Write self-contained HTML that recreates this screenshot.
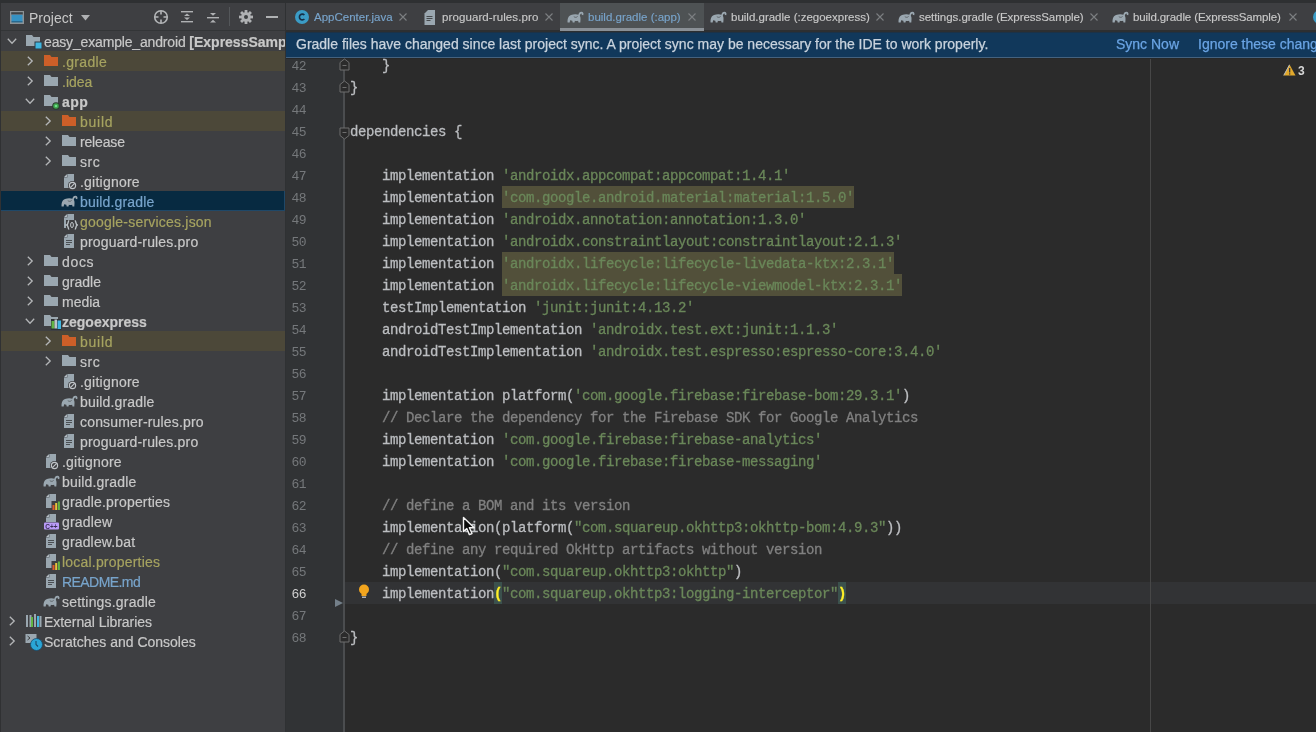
<!DOCTYPE html><html><head><meta charset="utf-8"><style>*{margin:0;padding:0;box-sizing:border-box}
html,body{width:1316px;height:732px;overflow:hidden;background:#2B2B2B;font-family:"Liberation Sans",sans-serif;position:relative}
.abs{position:absolute}
#top{left:0;top:0;width:1316px;height:3px;background:#2E3032}
#panel{left:0;top:3px;width:285px;height:729px;background:#3E3F42}
#ledge{left:0;top:3px;width:1px;height:729px;background:#303133;z-index:5}
#panelborder{left:285px;top:3px;width:1px;height:729px;background:#2F3133}
#phdr{left:0;top:3px;width:285px;height:28px;background:#3E3F42;border-bottom:1px solid #333537}
.row{position:absolute;left:1px;width:284px;height:20px;white-space:nowrap;overflow:hidden}
.row>*{margin-left:-1px}
.row .t{position:absolute;top:1px;line-height:20px;font-size:14px;color:#BBBBBB;-webkit-text-stroke:0.2px}
.ign{background:#4C4839}
.sel{background:#072A41;box-shadow:inset -1px -1px 0 #1F4868}
#tabs{left:286px;top:3px;width:1030px;height:27px;background:#3E3F42}
#tabsb{left:286px;top:30px;width:1030px;height:2px;background:#2D2F31}
#bdark{left:286px;top:58px;width:1030px;height:1px;background:#262829}
.tt{top:3px;line-height:28px;font-size:11.5px;color:#BBBBBB;white-space:nowrap;-webkit-text-stroke:0.15px}
#banner{left:286px;top:32px;width:1030px;height:26px;background:#11385B;box-shadow:inset 0 1px 0 #1C3247;border-bottom:1px solid #44627F;overflow:hidden}
#banner .t{position:absolute;top:-1px;line-height:26px;font-size:14px;color:#C9D3DD;white-space:nowrap;-webkit-text-stroke:0.25px}
#gutter{left:286px;top:59px;width:58px;height:673px;background:#313335}
#gline{left:343px;top:59px;width:2px;height:673px;background:#4B4D4F}
#margin{left:1150px;top:59px;width:1px;height:673px;background:#474747}
.ln{position:absolute;left:286px;width:20px;text-align:right;font-family:"Liberation Mono",monospace;font-size:13px;letter-spacing:-0.6px;line-height:22px;color:#75787B;padding-top:2px}
.ln.cur{color:#D2D2D2}
.cl{position:absolute;left:350px;height:22px;white-space:pre;font-family:"Liberation Mono",monospace;font-size:14px;letter-spacing:-0.4px;line-height:22px;color:#BBBDC0;padding-top:1px;-webkit-text-stroke:0.3px}
.s{color:#6A8759}
.c{color:#808080}
.hl{}
.br{color:#FFEF28;font-weight:bold}

#root{position:absolute;left:0;top:0;width:1316px;height:732px;background:#2B2B2B;will-change:transform;overflow:hidden}
</style></head><body><div id="root">
<div id="top" class="abs"></div><div id="panel" class="abs"></div><div id="ledge" class="abs"></div><div id="panelborder" class="abs"></div>
<div id="phdr" class="abs">
<svg class="abs" style="left:10px;top:8px" width="15" height="14" viewBox="0 0 15 14"><rect x="0" y="0" width="14" height="13" fill="#8C9296"/><rect x="1.2" y="1.2" width="11.6" height="2.3" fill="#3E4246"/><rect x="1.5" y="3.8" width="11" height="7.5" fill="#3592C4"/><rect x="1.5" y="10.3" width="11" height="1" fill="#25597a"/></svg>
<span class="abs" style="left:29px;top:1px;line-height:28px;font-size:14px;color:#C8C8C8">Project</span>
<svg class="abs" style="left:81px;top:12px" width="10" height="6" viewBox="0 0 10 6"><path d="M0 0 H9 L4.5 5.5 Z" fill="#AFB1B3"/></svg>
<svg class="abs" style="left:153px;top:6px" width="16" height="16" viewBox="0 0 16 16"><circle cx="8" cy="8" r="6.3" fill="none" stroke="#B4B6B8" stroke-width="1.6"/><path d="M8 2 V5.5 M8 10.5 V14 M2 8 H5.5 M10.5 8 H14" stroke="#B4B6B8" stroke-width="1.6"/></svg>
<svg class="abs" style="left:180px;top:5px" width="14" height="16" viewBox="0 0 14 16"><rect x="1" y="3" width="12" height="1.4" fill="#AFB1B3"/><rect x="1" y="13" width="12" height="1.4" fill="#AFB1B3"/><path d="M4 8 L7 5.5 L10 8 Z M4 9.5 L7 12 L10 9.5 Z" fill="#AFB1B3"/></svg>
<svg class="abs" style="left:206px;top:6px" width="14" height="16" viewBox="0 0 14 16"><rect x="1" y="8" width="12" height="1.4" fill="#AFB1B3"/><path d="M4 4 L10 4 L7 6.8 Z M4 13.5 L10 13.5 L7 10.7 Z" fill="#AFB1B3"/></svg>
<div class="abs" style="left:229px;top:4px;width:1px;height:19px;background:#54575a"></div>
<svg class="abs" style="left:239px;top:7px" width="14" height="14" viewBox="0 0 14 14"><g fill="#AFB1B3"><rect x="5.6" y="0" width="2.8" height="3.5" transform="rotate(0 7 7)"/><rect x="5.6" y="0" width="2.8" height="3.5" transform="rotate(45 7 7)"/><rect x="5.6" y="0" width="2.8" height="3.5" transform="rotate(90 7 7)"/><rect x="5.6" y="0" width="2.8" height="3.5" transform="rotate(135 7 7)"/><rect x="5.6" y="0" width="2.8" height="3.5" transform="rotate(180 7 7)"/><rect x="5.6" y="0" width="2.8" height="3.5" transform="rotate(225 7 7)"/><rect x="5.6" y="0" width="2.8" height="3.5" transform="rotate(270 7 7)"/><rect x="5.6" y="0" width="2.8" height="3.5" transform="rotate(315 7 7)"/><circle cx="7" cy="7" r="4.8"/></g><circle cx="7" cy="7" r="2" fill="#3C3F41"/></svg>
<div class="abs" style="left:266px;top:13px;width:12px;height:2px;background:#AFB1B3"></div>
</div>
<div class="row" style="top:31px">
<svg class="abs" style="left:7px;top:6px" width="10" height="8" viewBox="0 0 10 8"><path d="M0.8 1.8 L5 6.2 L9.2 1.8" fill="none" stroke="#B4B6B8" stroke-width="1.3"/></svg>
<svg class="abs" style="left:26px;top:4px" width="18" height="16" viewBox="0 0 18 16"><path d="M0 0 H6 L7.5 2 H14 V11 H0 Z" fill="#9AA7B0"/><rect x="8.5" y="6.5" width="7.5" height="7.5" fill="#2d3a45"/><rect x="9.5" y="7.5" width="6" height="6" fill="#40B6E0"/></svg>
<span class="t" style="left:44px;letter-spacing:0.000px">
<span style="color:#C8C8C8;letter-spacing:-0.16px;">easy_example_android </span>
<span style="color:#C8C8C8;font-weight:bold;">[ExpressSample]</span>
</span></div>
<div class="row ign" style="top:51px">
<svg class="abs" style="left:26px;top:5px" width="8" height="10" viewBox="0 0 8 10"><path d="M1.8 0.8 L6.2 5 L1.8 9.2" fill="none" stroke="#B4B6B8" stroke-width="1.3"/></svg>
<svg class="abs" style="left:44px;top:4px" width="18" height="16" viewBox="0 0 18 16"><path d="M0 0 H6 L7.5 2 H14 V11 H0 Z" fill="#CD5F28"/></svg>
<span class="t" style="left:62px;letter-spacing:0.333px">
<span style="color:#A6A360;">.gradle</span>
</span></div>
<div class="row" style="top:71px">
<svg class="abs" style="left:26px;top:5px" width="8" height="10" viewBox="0 0 8 10"><path d="M1.8 0.8 L6.2 5 L1.8 9.2" fill="none" stroke="#B4B6B8" stroke-width="1.3"/></svg>
<svg class="abs" style="left:44px;top:4px" width="18" height="16" viewBox="0 0 18 16"><path d="M0 0 H6 L7.5 2 H14 V11 H0 Z" fill="#9AA7B0"/></svg>
<span class="t" style="left:62px;letter-spacing:0.000px">
<span style="color:#A6A360;">.idea</span>
</span></div>
<div class="row" style="top:91px">
<svg class="abs" style="left:25px;top:6px" width="10" height="8" viewBox="0 0 10 8"><path d="M0.8 1.8 L5 6.2 L9.2 1.8" fill="none" stroke="#B4B6B8" stroke-width="1.3"/></svg>
<svg class="abs" style="left:44px;top:4px" width="18" height="16" viewBox="0 0 18 16"><path d="M0 0 H6 L7.5 2 H14 V11 H0 Z" fill="#9AA7B0"/><circle cx="12" cy="11" r="3.8" fill="#2d3a2f"/><circle cx="12" cy="11" r="2.8" fill="#3EA34B"/><circle cx="12" cy="11" r="1.3" fill="#6EE08A"/></svg>
<span class="t" style="left:62px;letter-spacing:0.500px">
<span style="color:#C8C8C8;font-weight:bold;">app</span>
</span></div>
<div class="row ign" style="top:111px">
<svg class="abs" style="left:44px;top:5px" width="8" height="10" viewBox="0 0 8 10"><path d="M1.8 0.8 L6.2 5 L1.8 9.2" fill="none" stroke="#B4B6B8" stroke-width="1.3"/></svg>
<svg class="abs" style="left:62px;top:4px" width="18" height="16" viewBox="0 0 18 16"><path d="M0 0 H6 L7.5 2 H14 V11 H0 Z" fill="#CD5F28"/></svg>
<span class="t" style="left:80px;letter-spacing:0.750px">
<span style="color:#A6A360;">build</span>
</span></div>
<div class="row" style="top:131px">
<svg class="abs" style="left:44px;top:5px" width="8" height="10" viewBox="0 0 8 10"><path d="M1.8 0.8 L6.2 5 L1.8 9.2" fill="none" stroke="#B4B6B8" stroke-width="1.3"/></svg>
<svg class="abs" style="left:62px;top:4px" width="18" height="16" viewBox="0 0 18 16"><path d="M0 0 H6 L7.5 2 H14 V11 H0 Z" fill="#9AA7B0"/></svg>
<span class="t" style="left:80px;letter-spacing:-0.167px">
<span style="color:#C8C8C8;">release</span>
</span></div>
<div class="row" style="top:151px">
<svg class="abs" style="left:44px;top:5px" width="8" height="10" viewBox="0 0 8 10"><path d="M1.8 0.8 L6.2 5 L1.8 9.2" fill="none" stroke="#B4B6B8" stroke-width="1.3"/></svg>
<svg class="abs" style="left:62px;top:4px" width="18" height="16" viewBox="0 0 18 16"><path d="M0 0 H6 L7.5 2 H14 V11 H0 Z" fill="#9AA7B0"/></svg>
<span class="t" style="left:80px;letter-spacing:0.500px">
<span style="color:#C8C8C8;">src</span>
</span></div>
<div class="row" style="top:171px">
<svg class="abs" style="left:62px;top:3px" width="16" height="16" viewBox="0 0 16 16"><path d="M5.5 0 H12 V14 H2 V3.5 Z" fill="#9AA7B0"/><path d="M2 3.5 L5.5 0 V3.5 Z" fill="#5a6166"/><path d="M2.2 2.9 L4.9 0.2 V2.9 Z" fill="#B9C2C8"/><circle cx="10.5" cy="11.5" r="4.5" fill="#3E3F42"/><circle cx="10.5" cy="11.5" r="3.1" fill="none" stroke="#C0C4C8" stroke-width="1.2"/><path d="M8.3 13.7 L12.7 9.3" stroke="#C0C4C8" stroke-width="1.2"/></svg>
<span class="t" style="left:80px;letter-spacing:0.222px">
<span style="color:#C8C8C8;">.gitignore</span>
</span></div>
<div class="row sel" style="top:191px">
<svg class="abs" style="left:61px;top:3px" width="17" height="14" viewBox="0 0 17 14"><path d="M0.6 12.5 C0.3 9 1.4 5.8 4 5 C7 4.1 10 4.2 12 5 C13.2 5.6 13.7 7.4 13.5 9.4 L13.3 12.5 H11.5 L11.1 10.7 C9.9 11.1 8.7 11.1 7.9 10.8 L7.5 12.5 H5.7 L5.3 10.7 C4.5 10.7 3.7 10.5 3.1 10.2 L2.7 12.5 Z" fill="#9AA7B0"/><path d="M11.8 6.2 C12.2 3.8 13.1 2.6 14.4 2.6 C15.6 2.6 15.9 3.8 15.4 5" fill="none" stroke="#9AA7B0" stroke-width="1.7"/><path d="M6.8 6.6 C8 7.6 9.6 7.6 10.6 6.4" fill="none" stroke="#50565a" stroke-width="0.8"/></svg>
<span class="t" style="left:80px;letter-spacing:0.182px">
<span style="color:#78A4CB;">build.gradle</span>
</span></div>
<div class="row" style="top:211px">
<svg class="abs" style="left:62px;top:3px" width="16" height="16" viewBox="0 0 16 16"><path d="M5.5 0 H12 V14 H2 V3.5 Z" fill="#9AA7B0"/><path d="M2 3.5 L5.5 0 V3.5 Z" fill="#5a6166"/><path d="M2.2 2.9 L4.9 0.2 V2.9 Z" fill="#B9C2C8"/><rect x="4" y="6" width="12" height="10" fill="#3E3F42"/><path d="M7.2 6.8 C5.6 6.8 6.6 10.5 4.8 11 C6.6 11.5 5.6 15.2 7.2 15.2 M12.8 6.8 C14.4 6.8 13.4 10.5 15.2 11 C13.4 11.5 14.4 15.2 12.8 15.2" fill="none" stroke="#C0C6CA" stroke-width="1.4"/><ellipse cx="10" cy="11" rx="1.4" ry="2.6" fill="none" stroke="#C0C6CA" stroke-width="1"/></svg>
<span class="t" style="left:80px;letter-spacing:0.211px">
<span style="color:#A6A360;">google-services.json</span>
</span></div>
<div class="row" style="top:231px">
<svg class="abs" style="left:62px;top:3px" width="16" height="16" viewBox="0 0 16 16"><path d="M5.5 0 H12 V14 H2 V3.5 Z" fill="#9AA7B0"/><path d="M2 3.5 L5.5 0 V3.5 Z" fill="#5a6166"/><path d="M2.2 2.9 L4.9 0.2 V2.9 Z" fill="#B9C2C8"/><rect x="4" y="6" width="6" height="1" fill="#4a4e52"/><rect x="4" y="8" width="6" height="1" fill="#4a4e52"/><rect x="4" y="10" width="4" height="1" fill="#4a4e52"/></svg>
<span class="t" style="left:80px;letter-spacing:0.176px">
<span style="color:#C8C8C8;">proguard-rules.pro</span>
</span></div>
<div class="row" style="top:251px">
<svg class="abs" style="left:26px;top:5px" width="8" height="10" viewBox="0 0 8 10"><path d="M1.8 0.8 L6.2 5 L1.8 9.2" fill="none" stroke="#B4B6B8" stroke-width="1.3"/></svg>
<svg class="abs" style="left:44px;top:4px" width="18" height="16" viewBox="0 0 18 16"><path d="M0 0 H6 L7.5 2 H14 V11 H0 Z" fill="#9AA7B0"/></svg>
<span class="t" style="left:62px;letter-spacing:0.667px">
<span style="color:#C8C8C8;">docs</span>
</span></div>
<div class="row" style="top:271px">
<svg class="abs" style="left:26px;top:5px" width="8" height="10" viewBox="0 0 8 10"><path d="M1.8 0.8 L6.2 5 L1.8 9.2" fill="none" stroke="#B4B6B8" stroke-width="1.3"/></svg>
<svg class="abs" style="left:44px;top:4px" width="18" height="16" viewBox="0 0 18 16"><path d="M0 0 H6 L7.5 2 H14 V11 H0 Z" fill="#9AA7B0"/></svg>
<span class="t" style="left:62px;letter-spacing:0.000px">
<span style="color:#C8C8C8;">gradle</span>
</span></div>
<div class="row" style="top:291px">
<svg class="abs" style="left:26px;top:5px" width="8" height="10" viewBox="0 0 8 10"><path d="M1.8 0.8 L6.2 5 L1.8 9.2" fill="none" stroke="#B4B6B8" stroke-width="1.3"/></svg>
<svg class="abs" style="left:44px;top:4px" width="18" height="16" viewBox="0 0 18 16"><path d="M0 0 H6 L7.5 2 H14 V11 H0 Z" fill="#9AA7B0"/></svg>
<span class="t" style="left:62px;letter-spacing:0.000px">
<span style="color:#C8C8C8;">media</span>
</span></div>
<div class="row" style="top:311px">
<svg class="abs" style="left:25px;top:6px" width="10" height="8" viewBox="0 0 10 8"><path d="M0.8 1.8 L5 6.2 L9.2 1.8" fill="none" stroke="#B4B6B8" stroke-width="1.3"/></svg>
<svg class="abs" style="left:44px;top:4px" width="18" height="16" viewBox="0 0 18 16"><path d="M0 0 H6 L7.5 2 H14 V11 H0 Z" fill="#9AA7B0"/><rect x="7" y="4" width="10.5" height="11" fill="#2d3235"/><rect x="7.5" y="6" width="3" height="7.5" fill="#62B543"/><rect x="10.5" y="4.5" width="2.5" height="9" fill="#BFC4C8"/><rect x="13.5" y="5.5" width="3.5" height="8.5" fill="#40B6E0"/></svg>
<span class="t" style="left:62px;letter-spacing:0.000px">
<span style="color:#C8C8C8;font-weight:bold;">zegoexpress</span>
</span></div>
<div class="row ign" style="top:331px">
<svg class="abs" style="left:44px;top:5px" width="8" height="10" viewBox="0 0 8 10"><path d="M1.8 0.8 L6.2 5 L1.8 9.2" fill="none" stroke="#B4B6B8" stroke-width="1.3"/></svg>
<svg class="abs" style="left:62px;top:4px" width="18" height="16" viewBox="0 0 18 16"><path d="M0 0 H6 L7.5 2 H14 V11 H0 Z" fill="#CD5F28"/></svg>
<span class="t" style="left:80px;letter-spacing:0.750px">
<span style="color:#A6A360;">build</span>
</span></div>
<div class="row" style="top:351px">
<svg class="abs" style="left:44px;top:5px" width="8" height="10" viewBox="0 0 8 10"><path d="M1.8 0.8 L6.2 5 L1.8 9.2" fill="none" stroke="#B4B6B8" stroke-width="1.3"/></svg>
<svg class="abs" style="left:62px;top:4px" width="18" height="16" viewBox="0 0 18 16"><path d="M0 0 H6 L7.5 2 H14 V11 H0 Z" fill="#9AA7B0"/></svg>
<span class="t" style="left:80px;letter-spacing:0.500px">
<span style="color:#C8C8C8;">src</span>
</span></div>
<div class="row" style="top:371px">
<svg class="abs" style="left:62px;top:3px" width="16" height="16" viewBox="0 0 16 16"><path d="M5.5 0 H12 V14 H2 V3.5 Z" fill="#9AA7B0"/><path d="M2 3.5 L5.5 0 V3.5 Z" fill="#5a6166"/><path d="M2.2 2.9 L4.9 0.2 V2.9 Z" fill="#B9C2C8"/><circle cx="10.5" cy="11.5" r="4.5" fill="#3E3F42"/><circle cx="10.5" cy="11.5" r="3.1" fill="none" stroke="#C0C4C8" stroke-width="1.2"/><path d="M8.3 13.7 L12.7 9.3" stroke="#C0C4C8" stroke-width="1.2"/></svg>
<span class="t" style="left:80px;letter-spacing:0.222px">
<span style="color:#C8C8C8;">.gitignore</span>
</span></div>
<div class="row" style="top:391px">
<svg class="abs" style="left:61px;top:3px" width="17" height="14" viewBox="0 0 17 14"><path d="M0.6 12.5 C0.3 9 1.4 5.8 4 5 C7 4.1 10 4.2 12 5 C13.2 5.6 13.7 7.4 13.5 9.4 L13.3 12.5 H11.5 L11.1 10.7 C9.9 11.1 8.7 11.1 7.9 10.8 L7.5 12.5 H5.7 L5.3 10.7 C4.5 10.7 3.7 10.5 3.1 10.2 L2.7 12.5 Z" fill="#9AA7B0"/><path d="M11.8 6.2 C12.2 3.8 13.1 2.6 14.4 2.6 C15.6 2.6 15.9 3.8 15.4 5" fill="none" stroke="#9AA7B0" stroke-width="1.7"/><path d="M6.8 6.6 C8 7.6 9.6 7.6 10.6 6.4" fill="none" stroke="#50565a" stroke-width="0.8"/></svg>
<span class="t" style="left:80px;letter-spacing:0.182px">
<span style="color:#C8C8C8;">build.gradle</span>
</span></div>
<div class="row" style="top:411px">
<svg class="abs" style="left:62px;top:3px" width="16" height="16" viewBox="0 0 16 16"><path d="M5.5 0 H12 V14 H2 V3.5 Z" fill="#9AA7B0"/><path d="M2 3.5 L5.5 0 V3.5 Z" fill="#5a6166"/><path d="M2.2 2.9 L4.9 0.2 V2.9 Z" fill="#B9C2C8"/><rect x="4" y="6" width="6" height="1" fill="#4a4e52"/><rect x="4" y="8" width="6" height="1" fill="#4a4e52"/><rect x="4" y="10" width="4" height="1" fill="#4a4e52"/></svg>
<span class="t" style="left:80px;letter-spacing:0.176px">
<span style="color:#C8C8C8;">consumer-rules.pro</span>
</span></div>
<div class="row" style="top:431px">
<svg class="abs" style="left:62px;top:3px" width="16" height="16" viewBox="0 0 16 16"><path d="M5.5 0 H12 V14 H2 V3.5 Z" fill="#9AA7B0"/><path d="M2 3.5 L5.5 0 V3.5 Z" fill="#5a6166"/><path d="M2.2 2.9 L4.9 0.2 V2.9 Z" fill="#B9C2C8"/><rect x="4" y="6" width="6" height="1" fill="#4a4e52"/><rect x="4" y="8" width="6" height="1" fill="#4a4e52"/><rect x="4" y="10" width="4" height="1" fill="#4a4e52"/></svg>
<span class="t" style="left:80px;letter-spacing:0.176px">
<span style="color:#C8C8C8;">proguard-rules.pro</span>
</span></div>
<div class="row" style="top:451px">
<svg class="abs" style="left:44px;top:3px" width="16" height="16" viewBox="0 0 16 16"><path d="M5.5 0 H12 V14 H2 V3.5 Z" fill="#9AA7B0"/><path d="M2 3.5 L5.5 0 V3.5 Z" fill="#5a6166"/><path d="M2.2 2.9 L4.9 0.2 V2.9 Z" fill="#B9C2C8"/><circle cx="10.5" cy="11.5" r="4.5" fill="#3E3F42"/><circle cx="10.5" cy="11.5" r="3.1" fill="none" stroke="#C0C4C8" stroke-width="1.2"/><path d="M8.3 13.7 L12.7 9.3" stroke="#C0C4C8" stroke-width="1.2"/></svg>
<span class="t" style="left:62px;letter-spacing:0.222px">
<span style="color:#C8C8C8;">.gitignore</span>
</span></div>
<div class="row" style="top:471px">
<svg class="abs" style="left:43px;top:3px" width="17" height="14" viewBox="0 0 17 14"><path d="M0.6 12.5 C0.3 9 1.4 5.8 4 5 C7 4.1 10 4.2 12 5 C13.2 5.6 13.7 7.4 13.5 9.4 L13.3 12.5 H11.5 L11.1 10.7 C9.9 11.1 8.7 11.1 7.9 10.8 L7.5 12.5 H5.7 L5.3 10.7 C4.5 10.7 3.7 10.5 3.1 10.2 L2.7 12.5 Z" fill="#9AA7B0"/><path d="M11.8 6.2 C12.2 3.8 13.1 2.6 14.4 2.6 C15.6 2.6 15.9 3.8 15.4 5" fill="none" stroke="#9AA7B0" stroke-width="1.7"/><path d="M6.8 6.6 C8 7.6 9.6 7.6 10.6 6.4" fill="none" stroke="#50565a" stroke-width="0.8"/></svg>
<span class="t" style="left:62px;letter-spacing:0.182px">
<span style="color:#C8C8C8;">build.gradle</span>
</span></div>
<div class="row" style="top:491px">
<svg class="abs" style="left:44px;top:3px" width="16" height="16" viewBox="0 0 16 16"><path d="M5.5 0 H12 V14 H2 V3.5 Z" fill="#9AA7B0"/><path d="M2 3.5 L5.5 0 V3.5 Z" fill="#5a6166"/><path d="M2.2 2.9 L4.9 0.2 V2.9 Z" fill="#B9C2C8"/><rect x="7.5" y="7" width="9" height="9" fill="#3E3F42"/><rect x="8.5" y="11" width="2" height="5" fill="#E05A2B"/><rect x="11.2" y="9" width="2" height="7" fill="#E8C43A"/><rect x="13.9" y="7.5" width="2" height="8.5" fill="#62B543"/></svg>
<span class="t" style="left:62px;letter-spacing:0.188px">
<span style="color:#C8C8C8;">gradle.properties</span>
</span></div>
<div class="row" style="top:511px">
<svg class="abs" style="left:44px;top:3px" width="16" height="16" viewBox="0 0 16 16"><path d="M5.5 0 H12 V8 H2 V3.5 Z" fill="#9AA7B0"/><path d="M2 3.5 L5.5 0 V3.5 Z" fill="#5a6166"/><path d="M2.2 2.9 L4.9 0.2 V2.9 Z" fill="#B9C2C8"/><rect x="0" y="8.5" width="15" height="7" rx="1" fill="#B99BF8"/><text x="7.5" y="14.6" font-size="6.5" text-anchor="middle" fill="#3a2f55" font-family="Liberation Sans" font-weight="bold">C++</text></svg>
<span class="t" style="left:62px;letter-spacing:0.167px">
<span style="color:#C8C8C8;">gradlew</span>
</span></div>
<div class="row" style="top:531px">
<svg class="abs" style="left:44px;top:3px" width="16" height="16" viewBox="0 0 16 16"><path d="M5.5 0 H12 V14 H2 V3.5 Z" fill="#9AA7B0"/><path d="M2 3.5 L5.5 0 V3.5 Z" fill="#5a6166"/><path d="M2.2 2.9 L4.9 0.2 V2.9 Z" fill="#B9C2C8"/><rect x="4" y="6" width="6" height="1" fill="#4a4e52"/><rect x="4" y="8" width="6" height="1" fill="#4a4e52"/><rect x="4" y="10" width="4" height="1" fill="#4a4e52"/></svg>
<span class="t" style="left:62px;letter-spacing:0.150px">
<span style="color:#C8C8C8;">gradlew.bat</span>
</span></div>
<div class="row" style="top:551px">
<svg class="abs" style="left:44px;top:3px" width="16" height="16" viewBox="0 0 16 16"><path d="M5.5 0 H12 V14 H2 V3.5 Z" fill="#9AA7B0"/><path d="M2 3.5 L5.5 0 V3.5 Z" fill="#5a6166"/><path d="M2.2 2.9 L4.9 0.2 V2.9 Z" fill="#B9C2C8"/><rect x="7.5" y="7" width="9" height="9" fill="#3E3F42"/><rect x="8.5" y="11" width="2" height="5" fill="#E05A2B"/><rect x="11.2" y="9" width="2" height="7" fill="#E8C43A"/><rect x="13.9" y="7.5" width="2" height="8.5" fill="#62B543"/></svg>
<span class="t" style="left:62px;letter-spacing:0.200px">
<span style="color:#A6A360;">local.properties</span>
</span></div>
<div class="row" style="top:571px">
<svg class="abs" style="left:44px;top:3px" width="16" height="16" viewBox="0 0 16 16"><path d="M5.5 0 H12 V14 H2 V3.5 Z" fill="#9AA7B0"/><path d="M2 3.5 L5.5 0 V3.5 Z" fill="#5a6166"/><path d="M2.2 2.9 L4.9 0.2 V2.9 Z" fill="#B9C2C8"/><rect x="4" y="6" width="6" height="1" fill="#4a4e52"/><rect x="4" y="8" width="6" height="1" fill="#4a4e52"/><rect x="4" y="10" width="4" height="1" fill="#4a4e52"/></svg>
<span class="t" style="left:62px;letter-spacing:-0.562px">
<span style="color:#78A4CB;">README.md</span>
</span></div>
<div class="row" style="top:591px">
<svg class="abs" style="left:43px;top:3px" width="17" height="14" viewBox="0 0 17 14"><path d="M0.6 12.5 C0.3 9 1.4 5.8 4 5 C7 4.1 10 4.2 12 5 C13.2 5.6 13.7 7.4 13.5 9.4 L13.3 12.5 H11.5 L11.1 10.7 C9.9 11.1 8.7 11.1 7.9 10.8 L7.5 12.5 H5.7 L5.3 10.7 C4.5 10.7 3.7 10.5 3.1 10.2 L2.7 12.5 Z" fill="#9AA7B0"/><path d="M11.8 6.2 C12.2 3.8 13.1 2.6 14.4 2.6 C15.6 2.6 15.9 3.8 15.4 5" fill="none" stroke="#9AA7B0" stroke-width="1.7"/><path d="M6.8 6.6 C8 7.6 9.6 7.6 10.6 6.4" fill="none" stroke="#50565a" stroke-width="0.8"/></svg>
<span class="t" style="left:62px;letter-spacing:0.193px">
<span style="color:#C8C8C8;">settings.gradle</span>
</span></div>
<div class="row" style="top:611px">
<svg class="abs" style="left:8px;top:5px" width="8" height="10" viewBox="0 0 8 10"><path d="M1.8 0.8 L6.2 5 L1.8 9.2" fill="none" stroke="#B4B6B8" stroke-width="1.3"/></svg>
<svg class="abs" style="left:26px;top:3px" width="16" height="13" viewBox="0 0 16 13"><rect x="0" y="1" width="2" height="12" fill="#9AA7B0"/><rect x="3.5" y="1" width="2" height="12" fill="#9AA7B0"/><rect x="5" y="3" width="2" height="10" fill="#62B543"/><rect x="8" y="0" width="2" height="13" fill="#9AA7B0"/><rect x="11" y="2" width="2" height="11" fill="#40B6E0"/><rect x="13.5" y="2" width="2" height="11" fill="#9AA7B0"/></svg>
<span class="t" style="left:44px;letter-spacing:-0.059px">
<span style="color:#C8C8C8;">External Libraries</span>
</span></div>
<div class="row" style="top:631px">
<svg class="abs" style="left:8px;top:5px" width="8" height="10" viewBox="0 0 8 10"><path d="M1.8 0.8 L6.2 5 L1.8 9.2" fill="none" stroke="#B4B6B8" stroke-width="1.3"/></svg>
<svg class="abs" style="left:25px;top:2px" width="18" height="18" viewBox="0 0 18 18"><rect x="0.5" y="1" width="11" height="9" fill="#9AA7B0"/><path d="M2.5 3 L5 5 L2.5 7" fill="none" stroke="#3C3F41" stroke-width="1"/><circle cx="11.5" cy="11.5" r="6" fill="#2AA5D6" stroke="#1a4a6a" stroke-width="0.8"/><path d="M11 8 V11.5 L13 13.5" fill="none" stroke="#1a4a6a" stroke-width="1.1"/></svg>
<span class="t" style="left:44px;letter-spacing:0.000px">
<span style="color:#C8C8C8;">Scratches and Consoles</span>
</span></div>
<div id="tabs" class="abs"></div><div id="tabsb" class="abs"></div>
<div class="abs" style="left:560px;top:3px;width:144px;height:28px;background:#4E5254"></div>
<div class="abs" style="left:560px;top:28px;width:144px;height:3px;background:#8A9096"></div>
<svg class="abs" style="left:295px;top:10px" width="15" height="15" viewBox="0 0 15 15"><circle cx="7" cy="7" r="7" fill="#3B9CC6"/><path d="M9.4 5 A2.9 2.9 0 1 0 9.4 9" fill="none" stroke="#163048" stroke-width="1.6"/></svg>
<span class="abs tt" style="left:314px;color:#78A4CB;letter-spacing:0px">AppCenter.java</span>
<svg class="abs" style="left:399px;top:13px" width="8" height="8" viewBox="0 0 8 8"><path d="M0.5 0.5 L7.5 7.5 M7.5 0.5 L0.5 7.5" stroke="#7C7F82" stroke-width="1.1"/></svg>
<svg class="abs" style="left:424px;top:10px" width="12" height="15" viewBox="0 0 12 15"><path d="M4 0 H11 V15 H0.5 V3.5 Z" fill="#9AA7B0"/><rect x="2.5" y="6" width="6" height="1" fill="#45494c"/><rect x="2.5" y="8" width="6" height="1" fill="#45494c"/><rect x="2.5" y="10" width="4" height="1" fill="#45494c"/></svg>
<span class="abs tt" style="left:442px;color:#C8C8C8;letter-spacing:0.1px">proguard-rules.pro</span>
<svg class="abs" style="left:545px;top:13px" width="8" height="8" viewBox="0 0 8 8"><path d="M0.5 0.5 L7.5 7.5 M7.5 0.5 L0.5 7.5" stroke="#7C7F82" stroke-width="1.1"/></svg>
<svg class="abs" style="left:567px;top:10px" width="17" height="14" viewBox="0 0 17 14"><path d="M0.6 12.5 C0.3 9 1.4 5.8 4 5 C7 4.1 10 4.2 12 5 C13.2 5.6 13.7 7.4 13.5 9.4 L13.3 12.5 H11.5 L11.1 10.7 C9.9 11.1 8.7 11.1 7.9 10.8 L7.5 12.5 H5.7 L5.3 10.7 C4.5 10.7 3.7 10.5 3.1 10.2 L2.7 12.5 Z" fill="#9AA7B0"/><path d="M11.8 6.2 C12.2 3.8 13.1 2.6 14.4 2.6 C15.6 2.6 15.9 3.8 15.4 5" fill="none" stroke="#9AA7B0" stroke-width="1.7"/><path d="M6.8 6.6 C8 7.6 9.6 7.6 10.6 6.4" fill="none" stroke="#50565a" stroke-width="0.8"/></svg>
<span class="abs tt" style="left:588px;color:#78A4CB;letter-spacing:0px">build.gradle (:app)</span>
<svg class="abs" style="left:688px;top:13px" width="8" height="8" viewBox="0 0 8 8"><path d="M0.5 0.5 L7.5 7.5 M7.5 0.5 L0.5 7.5" stroke="#7C7F82" stroke-width="1.1"/></svg>
<svg class="abs" style="left:710px;top:10px" width="17" height="14" viewBox="0 0 17 14"><path d="M0.6 12.5 C0.3 9 1.4 5.8 4 5 C7 4.1 10 4.2 12 5 C13.2 5.6 13.7 7.4 13.5 9.4 L13.3 12.5 H11.5 L11.1 10.7 C9.9 11.1 8.7 11.1 7.9 10.8 L7.5 12.5 H5.7 L5.3 10.7 C4.5 10.7 3.7 10.5 3.1 10.2 L2.7 12.5 Z" fill="#9AA7B0"/><path d="M11.8 6.2 C12.2 3.8 13.1 2.6 14.4 2.6 C15.6 2.6 15.9 3.8 15.4 5" fill="none" stroke="#9AA7B0" stroke-width="1.7"/><path d="M6.8 6.6 C8 7.6 9.6 7.6 10.6 6.4" fill="none" stroke="#50565a" stroke-width="0.8"/></svg>
<span class="abs tt" style="left:731px;color:#C8C8C8;letter-spacing:0px">build.gradle (:zegoexpress)</span>
<svg class="abs" style="left:876px;top:13px" width="8" height="8" viewBox="0 0 8 8"><path d="M0.5 0.5 L7.5 7.5 M7.5 0.5 L0.5 7.5" stroke="#7C7F82" stroke-width="1.1"/></svg>
<svg class="abs" style="left:898px;top:10px" width="17" height="14" viewBox="0 0 17 14"><path d="M0.6 12.5 C0.3 9 1.4 5.8 4 5 C7 4.1 10 4.2 12 5 C13.2 5.6 13.7 7.4 13.5 9.4 L13.3 12.5 H11.5 L11.1 10.7 C9.9 11.1 8.7 11.1 7.9 10.8 L7.5 12.5 H5.7 L5.3 10.7 C4.5 10.7 3.7 10.5 3.1 10.2 L2.7 12.5 Z" fill="#9AA7B0"/><path d="M11.8 6.2 C12.2 3.8 13.1 2.6 14.4 2.6 C15.6 2.6 15.9 3.8 15.4 5" fill="none" stroke="#9AA7B0" stroke-width="1.7"/><path d="M6.8 6.6 C8 7.6 9.6 7.6 10.6 6.4" fill="none" stroke="#50565a" stroke-width="0.8"/></svg>
<span class="abs tt" style="left:919px;color:#C8C8C8;letter-spacing:-0.05px">settings.gradle (ExpressSample)</span>
<svg class="abs" style="left:1090px;top:13px" width="8" height="8" viewBox="0 0 8 8"><path d="M0.5 0.5 L7.5 7.5 M7.5 0.5 L0.5 7.5" stroke="#7C7F82" stroke-width="1.1"/></svg>
<svg class="abs" style="left:1112px;top:10px" width="17" height="14" viewBox="0 0 17 14"><path d="M0.6 12.5 C0.3 9 1.4 5.8 4 5 C7 4.1 10 4.2 12 5 C13.2 5.6 13.7 7.4 13.5 9.4 L13.3 12.5 H11.5 L11.1 10.7 C9.9 11.1 8.7 11.1 7.9 10.8 L7.5 12.5 H5.7 L5.3 10.7 C4.5 10.7 3.7 10.5 3.1 10.2 L2.7 12.5 Z" fill="#9AA7B0"/><path d="M11.8 6.2 C12.2 3.8 13.1 2.6 14.4 2.6 C15.6 2.6 15.9 3.8 15.4 5" fill="none" stroke="#9AA7B0" stroke-width="1.7"/><path d="M6.8 6.6 C8 7.6 9.6 7.6 10.6 6.4" fill="none" stroke="#50565a" stroke-width="0.8"/></svg>
<span class="abs tt" style="left:1133px;color:#C8C8C8;letter-spacing:-0.11px">build.gradle (ExpressSample)</span>
<svg class="abs" style="left:1289px;top:13px" width="8" height="8" viewBox="0 0 8 8"><path d="M0.5 0.5 L7.5 7.5 M7.5 0.5 L0.5 7.5" stroke="#7C7F82" stroke-width="1.1"/></svg>
<svg class="abs" style="left:1313px;top:10px" width="15" height="15" viewBox="0 0 15 15"><circle cx="7" cy="7" r="7" fill="#3B9CC6"/><path d="M9.4 5 A2.9 2.9 0 1 0 9.4 9" fill="none" stroke="#163048" stroke-width="1.6"/></svg>
<div id="banner" class="abs"><span class="t" style="left:10px">Gradle files have changed since last project sync. A project sync may be necessary for the IDE to work properly.</span><span class="t" style="left:830px;color:#6AA4E4">Sync Now</span><span class="t" style="left:912px;color:#6AA4E4">Ignore these changes</span></div>
<div id="bdark" class="abs"></div><div id="gutter" class="abs"></div><div id="gline" class="abs"></div><div id="margin" class="abs"></div>
<div class="abs" style="left:345px;top:582px;width:971px;height:22px;background:#323335"></div>
<div class="abs" style="left:1150px;top:582px;width:1px;height:22px;background:#474747"></div>
<div class="abs" style="left:502px;top:186px;width:352px;height:22px;background:#52503A"></div>
<div class="abs" style="left:502px;top:252px;width:392px;height:22px;background:#52503A"></div>
<div class="abs" style="left:502px;top:274px;width:400px;height:22px;background:#52503A"></div>
<div class="abs" style="left:494px;top:582px;width:8px;height:22px;background:#3B514D"></div>
<div class="abs" style="left:838px;top:582px;width:8px;height:22px;background:#3B514D"></div>
<div class="ln" style="top:54px">42</div>
<div class="cl" style="top:54px">    }</div>
<div class="ln" style="top:76px">43</div>
<div class="cl" style="top:76px">}</div>
<div class="ln" style="top:98px">44</div>
<div class="ln" style="top:120px">45</div>
<div class="cl" style="top:120px">dependencies {</div>
<div class="ln" style="top:142px">46</div>
<div class="ln" style="top:164px">47</div>
<div class="cl" style="top:164px">    implementation <span class="s">&#x27;androidx.appcompat:appcompat:1.4.1&#x27;</span></div>
<div class="ln" style="top:186px">48</div>
<div class="cl" style="top:186px">    implementation <span class="s hl">&#x27;com.google.android.material:material:1.5.0&#x27;</span></div>
<div class="ln" style="top:208px">49</div>
<div class="cl" style="top:208px">    implementation <span class="s">&#x27;androidx.annotation:annotation:1.3.0&#x27;</span></div>
<div class="ln" style="top:230px">50</div>
<div class="cl" style="top:230px">    implementation <span class="s">&#x27;androidx.constraintlayout:constraintlayout:2.1.3&#x27;</span></div>
<div class="ln" style="top:252px">51</div>
<div class="cl" style="top:252px">    implementation <span class="s hl">&#x27;androidx.lifecycle:lifecycle-livedata-ktx:2.3.1&#x27;</span></div>
<div class="ln" style="top:274px">52</div>
<div class="cl" style="top:274px">    implementation <span class="s hl">&#x27;androidx.lifecycle:lifecycle-viewmodel-ktx:2.3.1&#x27;</span></div>
<div class="ln" style="top:296px">53</div>
<div class="cl" style="top:296px">    testImplementation <span class="s">&#x27;junit:junit:4.13.2&#x27;</span></div>
<div class="ln" style="top:318px">54</div>
<div class="cl" style="top:318px">    androidTestImplementation <span class="s">&#x27;androidx.test.ext:junit:1.1.3&#x27;</span></div>
<div class="ln" style="top:340px">55</div>
<div class="cl" style="top:340px">    androidTestImplementation <span class="s">&#x27;androidx.test.espresso:espresso-core:3.4.0&#x27;</span></div>
<div class="ln" style="top:362px">56</div>
<div class="ln" style="top:384px">57</div>
<div class="cl" style="top:384px">    implementation platform(<span class="s">&#x27;com.google.firebase:firebase-bom:29.3.1&#x27;</span>)</div>
<div class="ln" style="top:406px">58</div>
<div class="cl" style="top:406px">    <span class="c">// Declare the dependency for the Firebase SDK for Google Analytics</span></div>
<div class="ln" style="top:428px">59</div>
<div class="cl" style="top:428px">    implementation <span class="s">&#x27;com.google.firebase:firebase-analytics&#x27;</span></div>
<div class="ln" style="top:450px">60</div>
<div class="cl" style="top:450px">    implementation <span class="s">&#x27;com.google.firebase:firebase-messaging&#x27;</span></div>
<div class="ln" style="top:472px">61</div>
<div class="ln" style="top:494px">62</div>
<div class="cl" style="top:494px">    <span class="c">// define a BOM and its version</span></div>
<div class="ln" style="top:516px">63</div>
<div class="cl" style="top:516px">    implementation(platform(<span class="s">&quot;com.squareup.okhttp3:okhttp-bom:4.9.3&quot;</span>))</div>
<div class="ln" style="top:538px">64</div>
<div class="cl" style="top:538px">    <span class="c">// define any required OkHttp artifacts without version</span></div>
<div class="ln" style="top:560px">65</div>
<div class="cl" style="top:560px">    implementation(<span class="s">&quot;com.squareup.okhttp3:okhttp&quot;</span>)</div>
<div class="ln cur" style="top:582px">66</div>
<div class="cl" style="top:582px">    implementation<span class="br">(</span><span class="s">&quot;com.squareup.okhttp3:logging-interceptor&quot;</span><span class="br">)</span></div>
<div class="ln" style="top:604px">67</div>
<div class="ln" style="top:626px">68</div>
<div class="cl" style="top:626px">}</div>
<svg class="abs" style="left:339px;top:58px" width="11" height="13" viewBox="0 0 11 13"><path d="M1 12 V4.5 L5.5 1 L10 4.5 V12 Z" fill="#2B2B2B" stroke="#6E6E6E" stroke-width="1"/><path d="M3.5 7.5 H7.5" stroke="#6E6E6E" stroke-width="1"/></svg>
<svg class="abs" style="left:339px;top:80px" width="11" height="13" viewBox="0 0 11 13"><path d="M1 12 V4.5 L5.5 1 L10 4.5 V12 Z" fill="#2B2B2B" stroke="#6E6E6E" stroke-width="1"/><path d="M3.5 7.5 H7.5" stroke="#6E6E6E" stroke-width="1"/></svg>
<svg class="abs" style="left:339px;top:127px" width="11" height="13" viewBox="0 0 11 13"><path d="M1 1 V8.5 L5.5 12 L10 8.5 V1 Z" fill="#2B2B2B" stroke="#6E6E6E" stroke-width="1"/><path d="M3.5 5.5 H7.5" stroke="#6E6E6E" stroke-width="1"/></svg>
<svg class="abs" style="left:339px;top:630px" width="11" height="13" viewBox="0 0 11 13"><path d="M1 12 V4.5 L5.5 1 L10 4.5 V12 Z" fill="#2B2B2B" stroke="#6E6E6E" stroke-width="1"/><path d="M3.5 7.5 H7.5" stroke="#6E6E6E" stroke-width="1"/></svg>
<svg class="abs" style="left:358px;top:584px" width="12" height="15" viewBox="0 0 12 15"><circle cx="6" cy="5.5" r="5" fill="#F2A51E"/><rect x="3.5" y="9" width="5" height="3" fill="#F2A51E"/><rect x="4" y="12.5" width="4" height="1.5" fill="#AFB1B3"/></svg>
<svg class="abs" style="left:334px;top:598px" width="10" height="10" viewBox="0 0 10 10"><path d="M1 1 L9 5 L1 9 Z" fill="#74808A"/></svg>
<svg class="abs" style="left:1283px;top:64px" width="13" height="12" viewBox="0 0 13 12"><path d="M6.5 0.5 L12.5 11.5 H0.5 Z" fill="#E2A92C"/><path d="M6.5 0.8 L0.8 11.3" stroke="#B8BCC0" stroke-width="1"/><rect x="6" y="4" width="1.3" height="4.5" fill="#3B3B3B"/><rect x="6" y="9.3" width="1.3" height="1.3" fill="#3B3B3B"/></svg>
<span class="abs" style="left:1298px;top:63px;font-size:12px;line-height:16px;color:#D8D8D8;font-weight:bold">3</span>
<svg class="abs" style="left:462px;top:516px" width="16" height="22" viewBox="0 0 16 22"><path d="M1.5 1.5 L1.5 15.5 L4.8 12.6 L7.4 18.6 L10 17.5 L7.4 11.7 L12.2 11.7 Z" fill="#0A0A0A" stroke="#F2F2F2" stroke-width="1.4" stroke-linejoin="round"/></svg>
</div></body></html>
